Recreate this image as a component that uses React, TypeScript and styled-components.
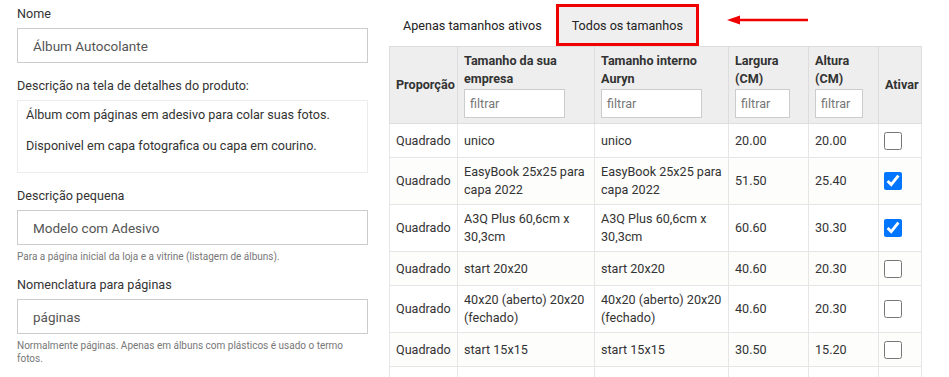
import React from 'react';
import styled, { createGlobalStyle } from 'styled-components';

const GlobalStyle = createGlobalStyle`
  html, body {
    margin: 0;
    padding: 0;
    background: #fff;
    font-family: Roboto, "Liberation Sans", Arial, sans-serif;
    color: #333;
  }
  * { box-sizing: border-box; }
`;

interface SizeRow {
  name: string;
  internal: string;
  width: string;
  height: string;
  active: boolean;
}

const rows: SizeRow[] = [
  { name: 'unico', internal: 'unico', width: '20.00', height: '20.00', active: false },
  { name: 'EasyBook 25x25 para capa 2022', internal: 'EasyBook 25x25 para capa 2022', width: '51.50', height: '25.40', active: true },
  { name: 'A3Q Plus 60,6cm x 30,3cm', internal: 'A3Q Plus 60,6cm x 30,3cm', width: '60.60', height: '30.30', active: true },
  { name: 'start 20x20', internal: 'start 20x20', width: '40.60', height: '20.30', active: false },
  { name: '40x20 (aberto) 20x20 (fechado)', internal: '40x20 (aberto) 20x20 (fechado)', width: '40.60', height: '20.30', active: false },
  { name: 'start 15x15', internal: 'start 15x15', width: '30.50', height: '15.20', active: false },
  { name: '', internal: '', width: '', height: '', active: false },
];

const App: React.FC = () => {
  return (
    <>
      <GlobalStyle />
      <Page>
        <FormColumn>
          <Field>
            <Label>Nome</Label>
            <TextInput defaultValue="Álbum Autocolante" />
          </Field>
          <Field>
            <Label>Descrição na tela de detalhes do produto:</Label>
            <RichBox>
              <p>Álbum com páginas em adesivo para colar suas fotos.</p>
              <p>Disponivel em capa fotografica ou capa em courino.</p>
            </RichBox>
          </Field>
          <Field>
            <Label>Descrição pequena</Label>
            <TextInput defaultValue="Modelo com Adesivo" />
            <Help>Para a página inicial da loja e a vitrine (listagem de álbuns).</Help>
          </Field>
          <Field>
            <Label>Nomenclatura para páginas</Label>
            <TextInput defaultValue="páginas" />
            <Help>Normalmente páginas. Apenas em álbuns com plásticos é usado o termo fotos.</Help>
          </Field>
        </FormColumn>

        <SizesPanel>
          <TabBar>
            <Tab>Apenas tamanhos ativos</Tab>
            <Tab $active>Todos os tamanhos</Tab>
            <Arrow width="82" height="14" viewBox="0 0 82 14">
              <line x1="10" y1="7" x2="81" y2="7" stroke="#f00000" strokeWidth="2.5" />
              <polygon points="0,7 13,2.5 13,11.5" fill="#f00000" />
            </Arrow>
          </TabBar>

          <SizesTable>
            <colgroup>
              <col style={{ width: 68 }} />
              <col style={{ width: 137 }} />
              <col style={{ width: 134 }} />
              <col style={{ width: 80 }} />
              <col style={{ width: 70 }} />
              <col style={{ width: 43 }} />
            </colgroup>
            <thead>
              <tr>
                <Th>Proporção</Th>
                <Th>
                  Tamanho da sua empresa
                  <FilterInput placeholder="filtrar" $w={101} />
                </Th>
                <Th>
                  Tamanho interno Auryn
                  <FilterInput placeholder="filtrar" $w={101} />
                </Th>
                <Th>
                  Largura (CM)
                  <FilterInput placeholder="filtrar" $w={55} />
                </Th>
                <Th>
                  Altura (CM)
                  <FilterInput placeholder="filtrar" $w={48} />
                </Th>
                <Th>Ativar</Th>
              </tr>
            </thead>
            <tbody>
              {rows.map((r, i) => (
                <tr key={i}>
                  <Td>{r.name ? 'Quadrado' : ''}</Td>
                  <Td>{r.name}</Td>
                  <Td>{r.internal}</Td>
                  <Td>{r.width}</Td>
                  <Td>{r.height}</Td>
                  <Td>
                    {r.name && (
                      <CheckWrap>
                        <Check type="checkbox" defaultChecked={r.active} />
                      </CheckWrap>
                    )}
                  </Td>
                </tr>
              ))}
            </tbody>
          </SizesTable>
        </SizesPanel>
      </Page>
    </>
  );
};

const Page = styled.div`
  display: flex;
  align-items: flex-start;
  width: 949px;
  height: 377px;
  overflow: hidden;
  padding: 4px 0 0 17px;
`;

const FormColumn = styled.div`
  width: 351px;
  flex-shrink: 0;
  display: flex;
  flex-direction: column;
  padding-top: 1px;
`;

const Field = styled.div`
  display: flex;
  flex-direction: column;
  margin-bottom: 14px;
`;

const Label = styled.label`
  font-size: 12.6px;
  line-height: 18px;
  color: #333;
  margin-bottom: 5px;
`;

const TextInput = styled.input`
  height: 35px;
  width: 100%;
  border: 1px solid #ccc;
  padding: 0 15px;
  font-family: inherit;
  font-size: 13.5px;
  color: #555;
  outline: none;
`;

const RichBox = styled.div`
  border: 1px solid #ececec;
  height: 73px;
  padding: 4px 8px;
  font-size: 12.6px;
  color: #333;

  p {
    margin: 0 0 12px 0;
    line-height: 19px;
  }
`;

const Help = styled.div`
  font-size: 10px;
  line-height: 13px;
  color: #777;
  margin-top: 5px;
  margin-bottom: -1px;
  padding-right: 14px;
`;

const SizesPanel = styled.div`
  margin-left: 21px;
  display: flex;
  flex-direction: column;
`;

const TabBar = styled.div`
  display: flex;
  align-items: center;
  height: 42px;
`;

const Tab = styled.div<{ $active?: boolean }>`
  height: 42px;
  display: flex;
  align-items: center;
  padding: 0 ${(p) => (p.$active ? '13px' : '14px')};
  font-size: 12.6px;
  color: #222;
  background: ${(p) => (p.$active ? '#efefef' : 'transparent')};
  border: ${(p) => (p.$active ? '3px solid #f00000' : 'none')};
`;

const Arrow = styled.svg`
  margin-left: 28px;
  margin-top: -10px;
`;

const SizesTable = styled.table`
  border-collapse: collapse;
  table-layout: fixed;
  width: 532px;
  font-size: 12.6px;
  color: #333;

  tbody tr:nth-child(even) td {
    background: #fdfdfc;
  }
`;

const Th = styled.th`
  background: #eee;
  border: 1px solid #ddd;
  padding: 5px 6px;
  text-align: left;
  vertical-align: middle;
  font-size: 12.6px;
  font-weight: 700;
  line-height: 18px;
  color: #333;
`;

const FilterInput = styled.input<{ $w: number }>`
  display: block;
  width: ${(p) => p.$w}px;
  height: 29px;
  margin-top: 1px;
  border: 1px solid #ccc;
  padding: 0 5px;
  font-family: inherit;
  font-size: 12.6px;
  font-weight: 400;
  outline: none;

  &::placeholder {
    color: #777;
  }
`;

const Td = styled.td`
  border: 1px solid #e6e6e6;
  padding: 5px 6px;
  vertical-align: middle;
  line-height: 18px;
  background: #fff;
`;

const CheckWrap = styled.div`
  height: 23px;
  display: flex;
  align-items: center;
`;

const Check = styled.input`
  width: 18px;
  height: 18px;
  margin: 0 0 0 -1px;
  accent-color: #0075ff;
`;

export default App;
